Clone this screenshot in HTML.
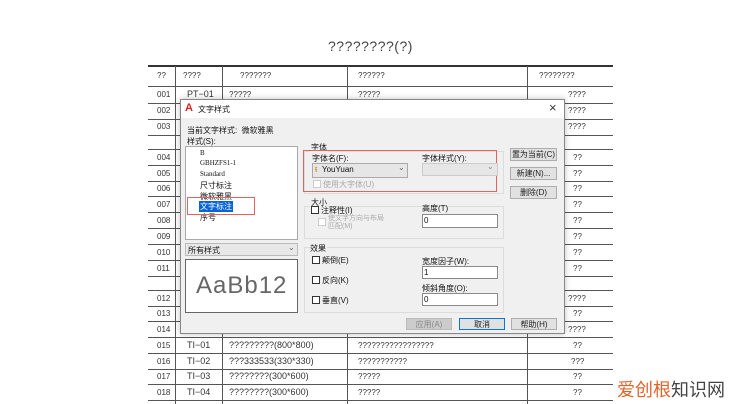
<!DOCTYPE html><html><head><meta charset="utf-8"><style>
*{margin:0;padding:0;box-sizing:border-box}
body{width:750px;height:404px;background:#fff;position:relative;overflow:hidden;font-family:"Liberation Sans","Noto Sans CJK SC",sans-serif;color:#222}
.a{position:absolute;white-space:nowrap}
.h{position:absolute;left:148px;width:465px;height:1px;background:#555}
.v{position:absolute;top:66px;width:1px;height:338px;background:#555}
.t{position:absolute;font-size:8px;color:#333;white-space:nowrap}
.d{font-size:8px;color:#111}
.box{position:absolute;background:#fff;border:1px solid #8a8a8a}
.btn{position:absolute;background:#e1e1e1;border:1px solid #adadad;font-size:8px;text-align:center;line-height:11px}
.cb{position:absolute;width:8px;height:8px;border:1px solid #333;background:#fff}
.grp{position:absolute;border:1px solid #dcdcdc}
.red{position:absolute;border:1px solid #e86060}
</style></head><body>
<div class="a" style="left:328px;top:38px;font-size:14px;color:#444;letter-spacing:0.5px">????????(?)</div>
<div class="h" style="top:65px;height:2px;background:#333"></div>
<div class="h" style="top:86px"></div><div class="h" style="top:103px"></div><div class="h" style="top:119px"></div><div class="h" style="top:135px"></div><div class="h" style="top:149px"></div><div class="h" style="top:165px"></div><div class="h" style="top:181px"></div><div class="h" style="top:196px"></div><div class="h" style="top:212px"></div><div class="h" style="top:228px"></div><div class="h" style="top:244px"></div><div class="h" style="top:260px"></div><div class="h" style="top:276px"></div><div class="h" style="top:290px"></div><div class="h" style="top:306px"></div><div class="h" style="top:321px"></div><div class="h" style="top:337px"></div><div class="h" style="top:353px"></div><div class="h" style="top:369px"></div><div class="h" style="top:384px"></div><div class="h" style="top:400px"></div>
<div class="v" style="left:175px"></div><div class="v" style="left:222px"></div><div class="v" style="left:347px"></div><div class="v" style="left:527px"></div>
<div class="t" style="left:157px;top:71px">??</div><div class="t" style="left:183px;top:71px">????</div><div class="t" style="left:240px;top:71px">???????</div><div class="t" style="left:358px;top:71px">??????</div><div class="t" style="left:539px;top:71px">????????</div>
<div class="t" style="left:157px;top:90px">001</div><div class="t" style="left:187px;top:89px;font-size:9px">PT−01</div><div class="t" style="left:229px;top:90px">?????</div><div class="t" style="left:358px;top:90px">?????</div>
<div class="t" style="left:157px;top:106px">002</div><div class="t" style="left:157px;top:122px">003</div>
<div class="t" style="left:568px;top:90px">????</div><div class="t" style="left:568px;top:106px">????</div><div class="t" style="left:568px;top:122px">????</div>
<div class="t" style="left:157px;top:153px">004</div><div class="t" style="left:157px;top:169px">005</div><div class="t" style="left:157px;top:184px">006</div><div class="t" style="left:157px;top:200px">007</div><div class="t" style="left:157px;top:216px">008</div><div class="t" style="left:157px;top:232px">009</div><div class="t" style="left:157px;top:248px">010</div><div class="t" style="left:157px;top:264px">011</div><div class="t" style="left:157px;top:294px">012</div><div class="t" style="left:157px;top:309px">013</div><div class="t" style="left:157px;top:325px">014</div><div class="t" style="left:157px;top:341px">015</div><div class="t" style="left:157px;top:357px">016</div><div class="t" style="left:157px;top:372px">017</div><div class="t" style="left:157px;top:388px">018</div>
<div class="t" style="left:573px;top:153px">??</div><div class="t" style="left:573px;top:169px">??</div><div class="t" style="left:573px;top:184px">??</div><div class="t" style="left:573px;top:200px">??</div><div class="t" style="left:573px;top:216px">??</div><div class="t" style="left:573px;top:232px">??</div><div class="t" style="left:573px;top:248px">??</div><div class="t" style="left:573px;top:264px">??</div><div class="t" style="left:568px;top:294px">????</div><div class="t" style="left:573px;top:309px">??</div><div class="t" style="left:568px;top:325px">????</div><div class="t" style="left:573px;top:341px">??</div><div class="t" style="left:571px;top:357px">???</div><div class="t" style="left:573px;top:372px">??</div><div class="t" style="left:573px;top:388px">??</div>
<div class="t" style="left:187px;top:340px;font-size:9px">TI−01</div><div class="t" style="left:229px;top:340px;font-size:9px">?????????(800*800)</div><div class="t" style="left:358px;top:341px">?????????????????</div>
<div class="t" style="left:187px;top:356px;font-size:9px">TI−02</div><div class="t" style="left:229px;top:356px;font-size:9px">???333533(330*330)</div><div class="t" style="left:358px;top:357px">???????????</div>
<div class="t" style="left:187px;top:371px;font-size:9px">TI−03</div><div class="t" style="left:229px;top:371px;font-size:9px">????????(300*600)</div><div class="t" style="left:358px;top:372px">?????</div>
<div class="t" style="left:187px;top:387px;font-size:9px">TI−04</div><div class="t" style="left:229px;top:387px;font-size:9px">????????(300*600)</div><div class="t" style="left:358px;top:388px">?????</div>
<!-- dialog -->
<div class="a" style="left:180px;top:99px;width:385px;height:235px;background:#f0f0f0;border:1px solid #888;box-shadow:0 0 6px rgba(0,0,0,.25)"></div>
<div class="a" style="left:181px;top:100px;width:383px;height:18px;background:#fff"></div>
<div class="a" style="left:185px;top:102px;font-size:11px;font-weight:bold;color:#d0261d">A</div>
<div class="a d" style="left:198px;top:104px;font-size:8px">文字样式</div>
<div class="a" style="left:549px;top:100px;font-size:13px;color:#333">×</div>
<div class="a d" style="left:187px;top:125px">当前文字样式:&nbsp; 微软雅黑</div>
<div class="a d" style="left:187px;top:136px">样式(S):</div>
<div class="box" style="left:185px;top:146px;width:113px;height:94px;border-color:#aaa"></div>
<div class="a d" style="left:200px;top:149px;font-size:7px;font-family:'Liberation Serif',serif">B</div>
<div class="a d" style="left:200px;top:159px;font-size:7px;font-family:'Liberation Serif',serif">GBHZFS1-1</div>
<div class="a d" style="left:200px;top:170px;font-size:7px;font-family:'Liberation Serif',serif">Standard</div>
<div class="a d" style="left:200px;top:180px">尺寸标注</div>
<div class="a d" style="left:200px;top:191px">微软雅黑</div>
<div class="a d" style="left:199px;top:201px;background:#0a64d6;color:#fff;padding:0 1px">文字标注</div>
<div class="a d" style="left:200px;top:212px">序号</div>
<div class="red" style="left:187px;top:197px;width:68px;height:18px"></div>
<div class="box" style="left:185px;top:243px;width:113px;height:13px;background:#e8e8e8;border-color:#bbb"></div>
<div class="a d" style="left:188px;top:245px">所有样式</div><div class="a" style="left:288px;top:243px;font-size:8px;color:#666">⌄</div>
<div class="box" style="left:185px;top:259px;width:113px;height:54px;border-color:#666"></div>
<div class="a" style="left:196px;top:272px;font-size:24px;color:#666;font-weight:300;letter-spacing:1px">AaBb12</div>
<div class="grp" style="left:304px;top:151px;width:200px;height:43px"></div>
<div class="a d" style="left:310px;top:142px;background:#f0f0f0;padding:0 1px">字体</div>
<div class="red" style="left:303px;top:150px;width:194px;height:42px"></div>
<div class="a d" style="left:312px;top:153px">字体名(F):</div>
<div class="a d" style="left:422px;top:153px">字体样式(Y):</div>
<div class="box" style="left:312px;top:163px;width:96px;height:15px;background:#e6e6e6;border-color:#aaa"></div>
<div class="a" style="left:315px;top:165px;font-size:8px;color:#b8860b">ŧ</div><div class="a d" style="left:322px;top:165px">YouYuan</div><div class="a" style="left:398px;top:163px;font-size:8px;color:#666">⌄</div>
<div class="box" style="left:422px;top:163px;width:76px;height:13px;background:#e6e6e6;border-color:#ccc"></div><div class="a" style="left:487px;top:162px;font-size:8px;color:#888">⌄</div>
<div class="cb" style="left:313px;top:180px;border-color:#ccc"></div><div class="a" style="left:323px;top:179px;font-size:8px;color:#aaa">使用大字体(U)</div>
<div class="btn" style="left:510px;top:148px;width:47px;height:13px">置为当前(C)</div>
<div class="btn" style="left:510px;top:167px;width:47px;height:13px">新建(N)...</div>
<div class="btn" style="left:510px;top:186px;width:47px;height:13px">删除(D)</div>
<div class="grp" style="left:304px;top:206px;width:200px;height:33px"></div>
<div class="a d" style="left:310px;top:197px;background:#f0f0f0;padding:0 1px">大小</div>
<div class="cb" style="left:311px;top:206px"></div><div class="a d" style="left:321px;top:205px">注释性(I)</div>
<div class="cb" style="left:318px;top:218px;border-color:#ccc"></div><div class="a" style="left:328px;top:215px;font-size:7px;color:#aaa;line-height:8px">使文字方向与布局<br>匹配(M)</div>
<div class="a d" style="left:422px;top:203px">高度(T)</div>
<div class="box" style="left:422px;top:214px;width:76px;height:14px"></div><div class="a d" style="left:424px;top:216px">0</div>
<div class="grp" style="left:304px;top:247px;width:200px;height:66px"></div>
<div class="a d" style="left:309px;top:243px;background:#f0f0f0;padding:0 1px">效果</div>
<div class="cb" style="left:312px;top:256px"></div><div class="a d" style="left:322px;top:255px">颠倒(E)</div>
<div class="cb" style="left:312px;top:276px"></div><div class="a d" style="left:322px;top:275px">反向(K)</div>
<div class="cb" style="left:312px;top:296px"></div><div class="a d" style="left:322px;top:295px">垂直(V)</div>
<div class="a d" style="left:422px;top:256px">宽度因子(W):</div>
<div class="box" style="left:422px;top:266px;width:76px;height:13px"></div><div class="a d" style="left:424px;top:268px">1</div>
<div class="a d" style="left:422px;top:283px">倾斜角度(O):</div>
<div class="box" style="left:422px;top:293px;width:76px;height:13px"></div><div class="a d" style="left:424px;top:295px">0</div>
<div class="btn" style="left:406px;top:318px;width:46px;height:12px;background:#ccc;border-color:#bbb;color:#888">应用(A)</div>
<div class="btn" style="left:459px;top:318px;width:46px;height:12px;border-color:#0078d7">取消</div>
<div class="btn" style="left:511px;top:318px;width:46px;height:12px">帮助(H)</div>
<div class="a" style="left:617px;top:376px;font-size:18px;font-family:'Noto Sans CJK SC',sans-serif"><span style="color:#e0642a">爱创根</span><span style="color:#444">知识网</span></div>
</body></html>
